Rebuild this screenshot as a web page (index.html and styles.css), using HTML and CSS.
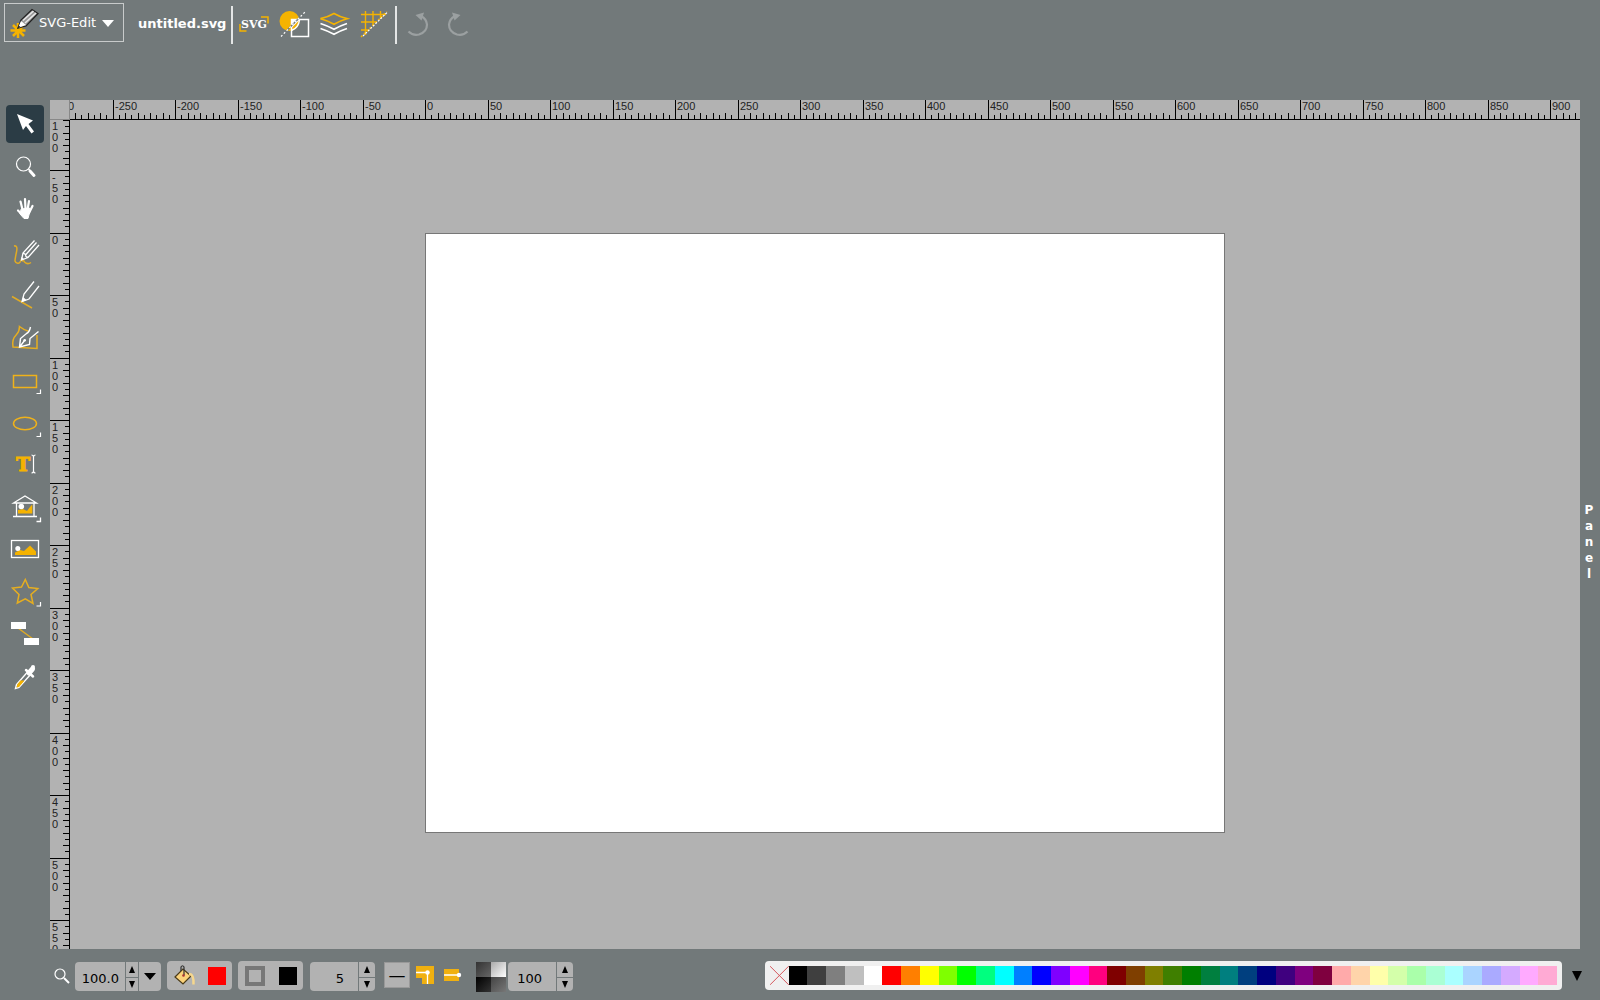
FILE: index.html
```html
<!DOCTYPE html>
<html lang="en">
<head>
<meta charset="utf-8">
<title>SVG-Edit</title>
<link rel="stylesheet" href="styles.css">
</head>
<body>
<div class="editor">
  <header class="topbar">
    <button class="main-menu" type="button">
      <svg class="icon" viewBox="0 0 30 30">
        <path d="M9 15v15M1.500 22.500h15M4 17l11 11M15 17L4 28" stroke="#f5b301" stroke-width="2.500"/>
        <path d="M9 20l3-8L23 1.500l6 4L17 18z" fill="#999" stroke="#222" stroke-width="1.300"/>
        <path d="M14 12.500L24.500 3M16 15L27 5" stroke="#e8e8e8" stroke-width="1.500"/>
        <path d="M9 20l3-7 5 4z" fill="#fff"/><path d="M8.500 20.500l1-3 2 1.500z" fill="#222"/>
      </svg>
      <span>SVG-Edit</span>
      <svg class="caret" viewBox="0 0 12 7"><path d="M0 0h12L6 7z" fill="#fff"/></svg>
    </button>
    <h1 class="title">untitled.svg</h1>
    <span class="separator"></span>
    <div class="actions">
      <button type="button" aria-label="Edit source"><svg class="icon" viewBox="0 0 30 30" fill="none">
        <path d="M1 15v7h6.500M22 8h7v6.500" stroke="#f5b301" stroke-width="1.500"/>
        <text class="source-mark" x="15" y="19" text-anchor="middle">SVG</text></svg></button>
      <button type="button" aria-label="Wireframe mode"><svg class="icon" viewBox="0 0 30 30" fill="none">
        <circle cx="10.500" cy="12" r="10" fill="#f5b301"/>
        <path d="M12.500 11h8l-8 8z" fill="#fff"/><path d="M20.500 11q-1 8-8 10.500" stroke="#fff" stroke-width="1.500"/>
        <rect x="12.500" y="10.500" width="17" height="17" stroke="#fff" stroke-width="1.500"/>
        <path d="M2 27.500L27 2" stroke="#72797a" stroke-width="1.500"/><path d="M2 27.500L27 2" stroke="#fff" stroke-width="1.200" stroke-dasharray="2 2"/></svg></button>
      <button type="button" aria-label="Layers"><svg class="icon" viewBox="0 0 30 30" fill="none" stroke-width="1.700">
        <path d="M1.500 9.700Q9 8 15 4.500q6 3.500 13 5.200-7 2-13 5.500-6-3.500-13.500-5.500z" stroke="#f5b301"/>
        <path d="M1.500 14.500Q9 17 15 20.300q6-3.500 13-5.800M1.500 19.500Q9 22 15 25.300q6-3.500 13-5.800" stroke="#fff"/></svg></button>
      <button type="button" aria-label="Grid"><svg class="icon" viewBox="0 0 30 30" fill="none">
        <path d="M6.500 2v24M14 2v15M21.500 2v8M2 5.500h25M2 13h16M2 21h8" stroke="#f5b301" stroke-width="1.400"/>
        <path d="M2 28L28 2.500" stroke="#f5b301" stroke-width="1.500" stroke-dasharray="2 2"/>
        <path d="M4 27L28 3.500" stroke="#fff" stroke-width="1.200" stroke-dasharray="2 1.500"/></svg></button>
    </div>
    <span class="separator"></span>
    <div class="actions history">
      <button type="button" aria-label="Undo"><svg class="icon" viewBox="0 0 30 30" fill="none">
        <path d="M5.500 22.500Q10 27 16 25.500Q24 23 24 15.500Q23.500 10 18 7" stroke="#9ba0a1" stroke-width="2.200"/><path d="M12.500 6l8.500-2.500-2.500 8z" fill="#9ba0a1"/></svg></button>
      <button type="button" aria-label="Redo"><svg class="icon" viewBox="0 0 30 30" fill="none">
        <path d="M24.500 22.500Q20 27 14 25.500Q6 23 6 15.500Q6.500 10 12 7" stroke="#9ba0a1" stroke-width="2.200"/><path d="M17.500 6L9 3.500l2.500 8z" fill="#9ba0a1"/></svg></button>
    </div>
  </header>

  <nav class="tools" aria-label="Tools">
    <button type="button" class="selected" aria-label="Select"><svg class="icon" viewBox="0 0 30 30">
      <path d="M7 5l16 6.500-4.500 3.500 5.500 7.500-2.500 2-5.500-7.500-3 4z" fill="#fff"/></svg></button>
    <button type="button" aria-label="Zoom"><svg class="icon" viewBox="0 0 30 30" fill="none" stroke="#fff">
      <circle cx="13.500" cy="12" r="7" stroke-width="1.200"/><path d="M18.500 17l2 2" stroke-width="1.500"/><path d="M20 19l4 4.500" stroke-width="3" stroke-linecap="round"/></svg></button>
    <button type="button" aria-label="Pan"><svg class="icon" viewBox="0 0 30 30" fill="none" stroke="#fff" stroke-linecap="round">
      <path d="M11.500 15l8-1 .500 3-2 7.500h-4L10 20z" fill="#fff"/><path d="M10.500 7.500l2 8M15 5l.500 10M19 7l-1.500 9M22.500 12L19 19M8 16.500l4 4" stroke-width="2.200"/></svg></button>
    <button type="button" aria-label="Pencil"><svg class="icon" viewBox="0 0 30 30" fill="none">
      <path d="M4 9q4-1 2.500 6T5 24q1 3 4 2 2-1 2.500-4M12 24q2-1 2.500 1 3 3 6.500.500" stroke="#e0ab25" stroke-width="1.500"/>
      <path d="M24.500 3.500L13 16l-1.500 7 6.500-2.500L29 8M26.500 5.500L15.500 18M13 16l2.500 1.500.500 2 2 1" stroke="#fff" stroke-width="1.300"/><path d="M11 23l.500-3 2.500 2z" fill="#fff"/></svg></button>
    <button type="button" aria-label="Line"><svg class="icon" viewBox="0 0 30 30" fill="none">
      <path d="M2 17.500l20 11.500" stroke="#e0ab25" stroke-width="1.500"/><path d="M24 2.500L14 15l-2 7.500 7-2.500L29 7" stroke="#fff" stroke-width="1.300"/><path d="M12 23l1-5 3.500 3z" fill="#fff"/></svg></button>
    <button type="button" aria-label="Path"><svg class="icon" viewBox="0 0 30 30" fill="none">
      <path d="M18 9q-4-1-8.500-4.500 0 5-3 8-5 5-3.500 12.500l24 1.500V13" stroke="#e6ae20" stroke-width="1.500"/>
      <path d="M20.500 5q-1 5-4 6.500l-6 5L9.500 25l10-2.500.500-6 8.500-7M10 24.500l4.500-6" stroke="#fff" stroke-width="1.400"/><circle cx="14.700" cy="18.300" r="1.300" fill="#fff"/></svg></button>
    <button type="button" aria-label="Rectangle"><svg class="icon" viewBox="0 0 30 30" fill="none">
      <rect x="3.500" y="11.500" width="23" height="12" stroke="#f0b21a" stroke-width="1.500"/><path d="M26.500 29.500h4v-4" stroke="#fff" stroke-width="1.200"/></svg></button>
    <button type="button" aria-label="Ellipse"><svg class="icon" viewBox="0 0 30 30" fill="none">
      <ellipse cx="15" cy="16.500" rx="11.500" ry="6.300" stroke="#f0b21a" stroke-width="1.500"/><path d="M26.500 29.500h4v-4" stroke="#fff" stroke-width="1.200"/></svg></button>
    <button type="button" aria-label="Text"><svg class="icon" viewBox="0 0 30 30" fill="none">
      <text class="text-mark" x="13" y="22" text-anchor="middle">T</text><path d="M23.500 7.500v15M21.500 6q1.500 0 2 1.500.500-1.500 2-1.500M21.500 24q1.500 0 2-1.500.500 1.500 2 1.500" stroke="#fff" stroke-width="1.200"/></svg></button>
    <button type="button" aria-label="Shape library"><svg class="icon" viewBox="0 0 30 30" fill="none">
      <path d="M3.500 11L15 4l11.500 7zM6.500 11v13.500M24 11v13.500M3 24.500h24M26.500 29.500h4v-4" stroke="#fff" stroke-width="1.300"/>
      <path d="M8 21.500V18l5-1 4 2 3-4 2.300-2.500v9z" fill="#f5b301"/><circle cx="11.300" cy="14.500" r="2.800" fill="#fff"/></svg></button>
    <button type="button" aria-label="Image"><svg class="icon" viewBox="0 0 30 30" fill="none">
      <rect x="1.500" y="6.500" width="27" height="17" stroke="#fff" stroke-width="1.300"/>
      <path d="M5 21v-2.500l5-2.500 4 1 6-5.500 6 6V21z" fill="#f5b301"/><circle cx="7.800" cy="14.500" r="2.500" fill="#fff"/></svg></button>
    <button type="button" aria-label="Star"><svg class="icon" viewBox="0 0 30 30" fill="none">
      <path d="M15.300 2.500l3.500 8 9 1-6.800 6 2 9-7.700-4.700L7.300 26 9 17.500 2.500 11l9-1z" stroke="#e6ae20" stroke-width="1.500"/><path d="M26.500 29h4v-4" stroke="#fff" stroke-width="1.200"/></svg></button>
    <button type="button" aria-label="Connector"><svg class="icon" viewBox="0 0 30 30">
      <path d="M8 9l15 11" stroke="#e0ab25" stroke-width="1.500"/><rect x="1" y="3" width="15" height="7" fill="#fff"/><rect x="14" y="19" width="15" height="7" fill="#fff"/></svg></button>
    <button type="button" aria-label="Eyedropper"><svg class="icon" viewBox="0 0 30 30" fill="none">
      <path d="M5.500 26.500l1-4L17.500 10l3 2.500L9 25.500z" stroke="#fff" stroke-width="1.400"/><path d="M6.500 25.500l1-3.500 3-3.500h4L9 25z" fill="#f5b301"/>
      <path d="M16 8l7 6.500" stroke="#fff" stroke-width="2.500" stroke-linecap="round"/><path d="M19 11l3.500-4" stroke="#fff" stroke-width="5" stroke-linecap="round"/><circle cx="23" cy="5" r="2" fill="#fff"/></svg></button>
  </nav>

  <main class="workspace">
    <div class="ruler-corner"></div>
    <svg class="ruler ruler-x" id="ruler-x"></svg>
    <svg class="ruler ruler-y" id="ruler-y"></svg>
    <div class="workarea" id="workarea"><div class="page" id="page"></div></div>
  </main>

  <aside class="side"><button type="button" class="side-handle" aria-label="Panel"><span>P</span><span>a</span><span>n</span><span>e</span><span>l</span></button></aside>

  <footer class="bottombar">
    <div class="zoom-group">
      <label for="zoom" aria-label="Zoom level"><svg class="zoom-icon" viewBox="0 0 18 18" fill="none" stroke="#fff"><circle cx="8" cy="6" r="5" stroke-width="1.200"/><path d="M12 10l5 5" stroke-width="2"/></svg></label>
      <div class="field">
        <input id="zoom" class="zoom-input" type="text" value="100.0">
        <div class="spin spin-narrow"><button type="button" aria-label="Zoom in"><svg viewBox="0 0 8 7"><path d="M1 7h6L4 0z"/></svg></button><button type="button" aria-label="Zoom out"><svg viewBox="0 0 8 7"><path d="M1 0h6L4 7z"/></svg></button></div>
        <button class="drop" type="button" aria-label="Zoom presets"><svg viewBox="0 0 12 7"><path d="M0 0h12L6 7z"/></svg></button>
      </div>
    </div>
    <div class="paint">
      <button type="button" aria-label="Fill"><svg class="paint-icon" viewBox="0 0 22 22">
        <path d="M1 12L9 4l8 7-8 8z" fill="#fbd27a" stroke="#4a3a18" stroke-width="1.200"/><path d="M15 9q5 0 4.500 10.500" fill="none" stroke="#f6d78e" stroke-width="2.500"/><path d="M7 6V2q1.500-2.500 3 0v8" fill="none" stroke="#333" stroke-width="1.200"/><circle cx="9.500" cy="10.500" r="1.300" fill="#a33"/></svg></button>
      <button type="button" class="swatch fill-swatch" aria-label="Fill colour"></button>
    </div>
    <div class="paint">
      <button type="button" class="stroke-ring" aria-label="Stroke"></button>
      <button type="button" class="swatch stroke-swatch" aria-label="Stroke colour"></button>
    </div>
    <div class="field stroke-field">
      <input class="number" type="text" value="5" aria-label="Stroke width">
      <div class="spin"><button type="button" aria-label="Wider"><svg viewBox="0 0 8 7"><path d="M1 7h6L4 0z"/></svg></button><button type="button" aria-label="Thinner"><svg viewBox="0 0 8 7"><path d="M1 0h6L4 7z"/></svg></button></div>
    </div>
    <div class="stroke-style">
      <select class="dash" aria-label="Stroke dash"><option>—</option></select>
      <button type="button" aria-label="Line join"><svg class="cap-icon" viewBox="0 0 18 18"><path d="M0 0h18v18H6V12H0z" fill="#f0b010"/><path d="M0 6.500h11.500V18" fill="none" stroke="#fff" stroke-width="1.300"/><circle cx="11.500" cy="6.500" r="2.200" fill="#fff"/></svg></button>
      <button type="button" aria-label="Line cap"><svg class="cap-icon" viewBox="0 0 18 18"><path d="M0 3h15v12H0z" fill="#f0b010"/><path d="M0 9h15" stroke="#fff" stroke-width="1.500"/><circle cx="15" cy="9" r="2.200" fill="#fff"/></svg></button>
    </div>
    <div class="opacity-group">
      <label for="opacity" class="checker" aria-label="Opacity"><i></i><i></i><i></i><i></i></label>
      <div class="field">
        <input id="opacity" class="number" type="text" value="100">
        <div class="spin"><button type="button" aria-label="More opaque"><svg viewBox="0 0 8 7"><path d="M1 7h6L4 0z"/></svg></button><button type="button" aria-label="Less opaque"><svg viewBox="0 0 8 7"><path d="M1 0h6L4 7z"/></svg></button></div>
      </div>
    </div>
    <div class="palette" id="palette"></div>
    <button type="button" class="palette-toggle" aria-label="Toggle palette"><svg viewBox="0 0 10 10"><path d="M0 0h10L5 10z"/></svg></button>
  </footer>
</div>
<script src="script.js"></script>
</body>
</html>
```
FILE: styles.css
```css
* { box-sizing: border-box; }
body {
  margin: 0;
  background: #72797a;
  color: #fff;
  font: 13px/16px "DejaVu Sans", Verdana, sans-serif;
}
button, input, select {
  font: inherit;
  color: inherit;
  margin: 0;
  padding: 0;
  border: 0;
  background: none;
}
svg { display: block; }
.icon { width: 30px; height: 30px; overflow: visible; }

.editor {
  display: grid;
  grid-template: 100px minmax(0, 1fr) 51px / 50px minmax(0, 1fr) 20px;
  height: 100vh;
}

/* Top bar */
.topbar {
  grid-column: 1 / -1;
  display: flex;
  align-items: flex-start;
  padding: 3px 4px;
}
.main-menu {
  display: flex;
  align-items: center;
  height: 39px;
  width: 120px;
  padding: 1px 0 0 4px;
  border: 1px solid #c8cbcb;
}
.caret { width: 12px; height: 7px; margin-left: 6px; }
.title { margin: 13px 5px 0 14px; font-size: 13px; line-height: 16px; }
.separator { width: 2px; height: 38px; margin-top: 3px; background: #e4e6e6; }
.actions { display: flex; gap: 10px; margin: 6px 6px 0; }
.source-mark { font: bold 11px "DejaVu Serif", serif; fill: #fff; }

/* Tool column */
.tools {
  grid-row: 2 / 4;
  display: grid;
  grid-auto-rows: 1fr;
  justify-items: center;
  align-items: center;
  align-self: start;
  height: 595px;
  margin-top: 3px;
}
.tools button {
  display: grid;
  place-items: center;
  width: 38px;
  height: 38px;
  border-radius: 4px;
}
.tools .selected { background: #2b3c45; }
.text-mark {
  font: bold 19px "DejaVu Serif", serif;
  fill: #f5b301;
  stroke: #f5b301;
  stroke-width: 1px;
}

/* Rulers and canvas */
.workspace {
  display: grid;
  grid-template: 20px minmax(0, 1fr) / 20px minmax(0, 1fr);
  background: #b2b2b2;
  min-height: 0;
}
.ruler-corner { border-right: 1px solid #888; border-bottom: 1px solid #888; }
.ruler { width: 100%; height: 100%; overflow: hidden; }
.ruler text { font: 11px "Liberation Sans", Arial, sans-serif; fill: #222; }
.ruler path { stroke: #000; shape-rendering: crispEdges; }
.workarea {
  display: flex;
  align-items: center;
  justify-content: center;
  padding-bottom: 4px;
  overflow: hidden;
}
.page {
  flex: none;
  width: 800px;
  height: 600px;
  background: #fff;
  border: 1px solid #777;
}

/* Right handle */
.side { display: flex; align-items: center; justify-content: center; padding: 35px 2px 0 0; }
.side-handle {
  display: flex;
  flex-direction: column;
  align-items: center;
  font-size: 12px;
  font-weight: bold;
  line-height: 16px;
}

/* Bottom bar */
.bottombar {
  grid-column: 2 / -1;
  display: flex;
  align-items: center;
  padding: 4px 18px 0 2px;
  color: #000;
}
.zoom-group, .opacity-group, .stroke-style { display: flex; align-items: center; }
.zoom-icon { width: 18px; height: 18px; margin-right: 5px; }
.field {
  display: flex;
  height: 29px;
  background: #b2b2b2;
  border-radius: 4px;
  overflow: hidden;
}
.field input { text-align: right; padding-top: 4px; }
.zoom-input { width: 50px; padding-right: 6px; }
.number { width: 48px; padding-right: 14px; }
.spin { display: grid; grid-template-rows: 1fr 1fr; width: 17px; border-left: 1px solid #72797a; }
.spin-narrow { width: 13px; }
.spin button { display: grid; place-items: center; }
.spin button + button { border-top: 1px solid #72797a; }
.spin svg { width: 8px; height: 7px; }
.drop { display: grid; place-items: center; width: 23px; border-left: 1px solid #72797a; }
.drop svg { width: 12px; height: 7px; }
.paint {
  display: flex;
  align-items: center;
  justify-content: space-between;
  width: 65px;
  height: 29px;
  margin: 0 0 2px 6px;
  padding: 0 6px 0 7px;
  background: #b2b2b2;
  border-radius: 4px;
}
.paint-icon { width: 22px; height: 22px; }
.swatch { width: 18px; height: 18px; }
.fill-swatch { background: #f00; }
.stroke-swatch { background: #000; }
.stroke-ring { width: 20px; height: 20px; border: 4px solid #777; }
.stroke-field { margin-left: 7px; }
.stroke-style { gap: 10px; margin: 0 14px 3px 9px; }
.dash {
  appearance: none;
  width: 26px;
  height: 26px;
  background: #b2b2b2;
  border: 1px solid #999;
  font-size: 17px;
  text-align: center;
}
.stroke-style .dash { margin-right: -4px; }
.cap-icon { width: 18px; height: 18px; }
.checker { display: grid; grid-template: 15px 15px / 15px 15px; margin-right: 2px; }
.checker i:nth-child(1) { background: linear-gradient(135deg, #333, #666); }
.checker i:nth-child(2) { background: linear-gradient(135deg, #aaa, #fff); }
.checker i:nth-child(3) { background: linear-gradient(135deg, #000, #333); }
.checker i:nth-child(4) { background: linear-gradient(135deg, #444, #777); }
.palette {
  display: grid;
  grid-template-columns: repeat(42, 1fr);
  width: 797px;
  height: 29px;
  margin: 0 10px 2px auto;
  padding: 5px;
  background: #f0f0f0;
  border-radius: 4px;
}
.palette button { height: 19px; }
.palette svg { width: 100%; height: 19px; }
.palette-toggle { padding-bottom: 2px; }
.palette-toggle svg { width: 10px; height: 10px; }
```
FILE: script.js
```js
const ZOOM = 1.25;
const STEP = 50;

// Draws one ruler; origin is the offset of user unit 0 along its length.
function drawRuler(svg, origin, length, vertical) {
  const minor = STEP * ZOOM / 10;
  let lines = vertical ? `M19.5 0V${length}` : `M0 19.5H${length}`;
  let labels = "";
  const first = Math.floor(-origin / minor / 10) * 10;
  for (let i = first; origin + i * minor < length; i++) {
    const pos = Math.round(origin + i * minor) + 0.5;
    const major = i % 10 === 0;
    const size = major ? 20 : i % 2 ? 5 : 7;
    lines += vertical ? `M${20 - size} ${pos}H20` : `M${pos} ${20 - size}V20`;
    if (!major) continue;
    const label = String(i / 10 * STEP);
    if (vertical) {
      [...label].forEach((c, n) => {
        labels += `<text x="2" y="${pos + 10.5 + n * 11}">${c}</text>`;
      });
    } else {
      labels += `<text x="${pos + 1.5}" y="10">${label}</text>`;
    }
  }
  svg.innerHTML = `<path d="${lines}"/>${labels}`;
}

function drawRulers() {
  const area = document.getElementById("workarea").getBoundingClientRect();
  const page = document.getElementById("page").getBoundingClientRect();
  drawRuler(document.getElementById("ruler-x"), page.left - area.left, area.width, false);
  drawRuler(document.getElementById("ruler-y"), page.top - area.top, area.height, true);
}

const COLORS = ["none", "#000000", "#3f3f3f", "#7f7f7f", "#bfbfbf", "#ffffff",
  "#ff0000", "#ff7f00", "#ffff00", "#7fff00", "#00ff00", "#00ff7f",
  "#00ffff", "#007fff", "#0000ff", "#7f00ff", "#ff00ff", "#ff007f",
  "#7f0000", "#7f3f00", "#7f7f00", "#3f7f00", "#007f00", "#007f3f",
  "#007f7f", "#003f7f", "#00007f", "#3f007f", "#7f007f", "#7f003f",
  "#ffaaaa", "#ffd4aa", "#ffffaa", "#d4ffaa", "#aaffaa", "#aaffd4",
  "#aaffff", "#aad4ff", "#aaaaff", "#d4aaff", "#ffaaff", "#ffaad4"];

document.getElementById("palette").innerHTML = COLORS.map((c) => c === "none"
  ? '<button type="button" aria-label="none"><svg viewBox="0 0 19 19"><path d="M0 0L19 19M19 0L0 19" stroke="#d4555a"/></svg></button>'
  : `<button type="button" aria-label="${c}" style="background:${c}"></button>`).join("");

drawRulers();
window.addEventListener("resize", drawRulers);
```
